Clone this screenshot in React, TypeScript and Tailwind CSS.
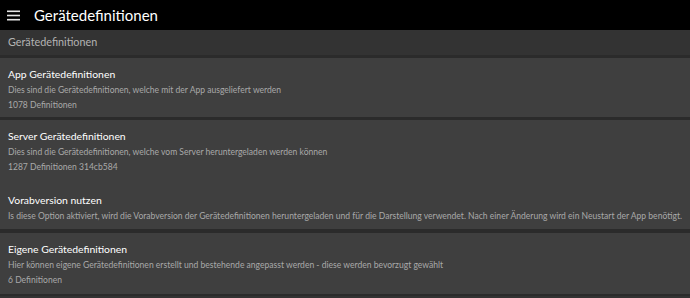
import React from "react";

const font = { fontFamily: 'Lato, "Noto Sans", sans-serif' };

function Item({ title, desc, extra }: { title: string; desc: string; extra?: string }) {
  return (
    <div className="flex flex-col px-2">
      <div className="text-[10.4px] leading-[15px] text-white">{title}</div>
      <div className="mt-[1px] text-[8.55px] leading-[15px] text-[#a9a9a9] whitespace-nowrap">{desc}</div>
      {extra && <div className="text-[8.55px] leading-[14px] text-[#a9a9a9]">{extra}</div>}
    </div>
  );
}

export default function App() {
  return (
    <div className="w-[690px] h-[298px] bg-[#2b2b2b] flex flex-col overflow-hidden" style={font}>
      <div className="h-[30px] bg-black flex items-center shrink-0">
        <svg width="13" height="11" viewBox="0 0 13 11" className="ml-[7px]">
          <rect x="0" y="0.5" width="13" height="1.6" fill="#e6e6e6" />
          <rect x="0" y="4.7" width="13" height="1.6" fill="#e6e6e6" />
          <rect x="0" y="8.9" width="13" height="1.6" fill="#e6e6e6" />
        </svg>
        <span className="ml-[14px] text-[15px] leading-none text-white">Gerätedefinitionen</span>
      </div>
      <div className="h-[25px] bg-[#333333] flex items-center px-2 shrink-0">
        <span className="text-[10.8px] text-[#b3b3b3]">Gerätedefinitionen</span>
      </div>
      <div className="mt-[3px] h-[59px] bg-[#3f3f3f] pt-[9px] shrink-0">
        <Item
          title="App Gerätedefinitionen"
          desc="Dies sind die Gerätedefinitionen, welche mit der App ausgeliefert werden"
          extra="1078 Definitionen"
        />
      </div>
      <div className="mt-[3px] h-[109px] bg-[#3f3f3f] pt-[9px] flex flex-col gap-[19px] shrink-0">
        <Item
          title="Server Gerätedefinitionen"
          desc="Dies sind die Gerätedefinitionen, welche vom Server heruntergeladen werden können"
          extra="1287 Definitionen 314cb584"
        />
        <Item
          title="Vorabversion nutzen"
          desc="Is diese Option aktiviert, wird die Vorabversion der Gerätedefinitionen heruntergeladen und für die Darstellung verwendet. Nach einer Änderung wird ein Neustart der App benötigt."
        />
      </div>
      <div className="mt-[4px] h-[61px] bg-[#3f3f3f] pt-[9px] shrink-0">
        <Item
          title="Eigene Gerätedefinitionen"
          desc="Hier können eigene Gerätedefinitionen erstellt und bestehende angepasst werden - diese werden bevorzugt gewählt"
          extra="6 Definitionen"
        />
      </div>
      <div className="mt-[2px] flex-1 bg-[#333333]" />
    </div>
  );
}
